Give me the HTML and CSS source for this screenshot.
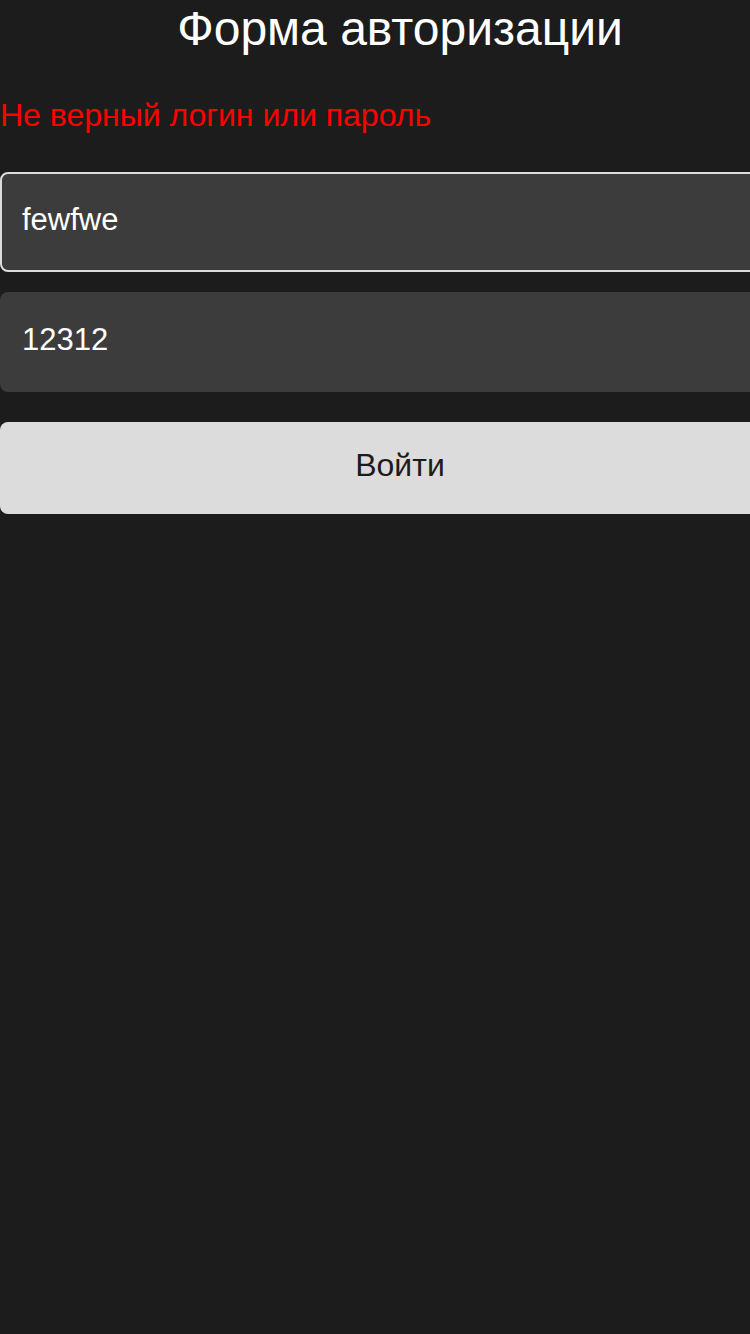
FILE: index.html
```html
<!DOCTYPE html>
<html lang="ru">
<head>
<meta charset="utf-8">
<title>Форма авторизации</title>
<link rel="stylesheet" href="styles.css">
</head>
<body>
<div class="page">
  <h1 class="title">Форма авторизации</h1>
  <p class="error">Не верный логин или пароль</p>
  <form class="form">
    <input class="field field-focus" type="text" value="fewfwe">
    <input class="field" type="text" value="12312">
    <button class="submit" type="button">Войти</button>
  </form>
</div>
</body>
</html>
```
FILE: styles.css
```css
html, body {
  margin: 0;
  padding: 0;
  background: #1c1c1c;
  overflow: hidden;
}
.page {
  width: 800px;
  font-family: "Liberation Sans", Arial, sans-serif;
  color: #fff;
}
.title {
  margin: 1px 0 0;
  font-size: 48px;
  font-weight: normal;
  text-align: center;
  line-height: 55px;
}
.error {
  margin: 41px 0 0;
  font-size: 32px;
  line-height: 37px;
  color: #ff0000;
}
.form {
  margin-top: 38px;
  display: flex;
  flex-direction: column;
}
.field {
  box-sizing: border-box;
  width: 100%;
  height: 100px;
  margin: 0 0 20px;
  padding: 0 20px 4px;
  border: 2px solid transparent;
  border-radius: 8px;
  background: #3c3c3c;
  color: #fff;
  font-family: "Liberation Sans", Arial, sans-serif;
  font-size: 31px;
  outline: none;
}
.field-focus {
  border-color: #dcdcdc;
}
.submit {
  box-sizing: border-box;
  width: 100%;
  height: 92px;
  margin-top: 10px;
  padding: 0 0 5px;
  border: none;
  border-radius: 8px;
  background: #dcdcdc;
  color: #1c1c1c;
  font-family: "Liberation Sans", Arial, sans-serif;
  font-size: 32px;
}
```
